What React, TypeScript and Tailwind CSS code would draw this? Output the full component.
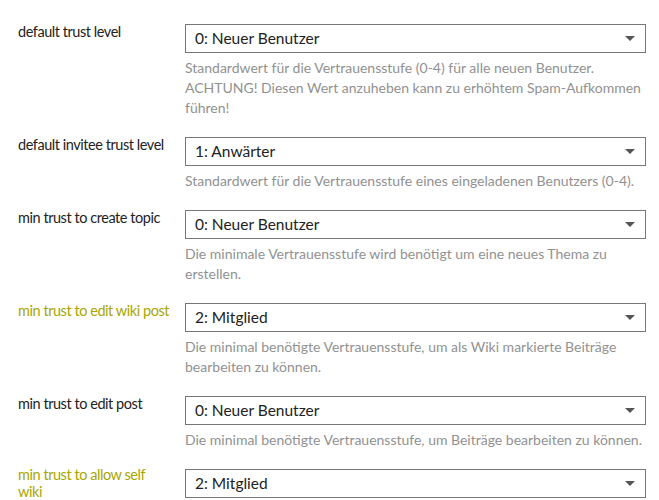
import React from 'react';

interface SettingRow {
  label: string[];
  value: string;
  lines: string[];
  overridden?: boolean;
}

const rows: SettingRow[] = [
  {
    label: ['default trust level'],
    value: '0: Neuer Benutzer',
    lines: [
      'Standardwert für die Vertrauensstufe (0-4) für alle neuen Benutzer.',
      'ACHTUNG! Diesen Wert anzuheben kann zu erhöhtem Spam-Aufkommen',
      'führen!',
    ],
  },
  {
    label: ['default invitee trust level'],
    value: '1: Anwärter',
    lines: ['Standardwert für die Vertrauensstufe eines eingeladenen Benutzers (0-4).'],
  },
  {
    label: ['min trust to create topic'],
    value: '0: Neuer Benutzer',
    lines: ['Die minimale Vertrauensstufe wird benötigt um eine neues Thema zu', 'erstellen.'],
  },
  {
    label: ['min trust to edit wiki post'],
    value: '2: Mitglied',
    overridden: true,
    lines: [
      'Die minimal benötigte Vertrauensstufe, um als Wiki markierte Beiträge',
      'bearbeiten zu können.',
    ],
  },
  {
    label: ['min trust to edit post'],
    value: '0: Neuer Benutzer',
    lines: ['Die minimal benötigte Vertrauensstufe, um Beiträge bearbeiten zu können.'],
  },
  {
    label: ['min trust to allow self', 'wiki'],
    value: '2: Mitglied',
    overridden: true,
    lines: [],
  },
];

function Caret() {
  return (
    <svg width="10" height="5" viewBox="0 0 10 5" className="shrink-0">
      <polygon points="0,0 10,0 5,5" fill="#555555" />
    </svg>
  );
}

export default function App() {
  return (
    <div className="w-[659px] h-[500px] overflow-hidden bg-white pt-[24px] pl-[18px]">
      {rows.map((row) => (
        <div key={row.label.join(' ')} className="flex mb-[19px]">
          {/* setting label */}
          <div
            className={`w-[150px] mr-[17px] shrink-0 font-['Lato',sans-serif] text-[14.5px] tracking-[-0.45px] ${
              row.label.length > 1 ? 'leading-[17px] -mt-[3px]' : 'leading-[15px]'
            } ${row.overridden ? 'text-[#a8a600]' : 'text-[#222222]'}`}
          >
            {row.label.map((l) => (
              <div key={l} className="whitespace-nowrap">
                {l}
              </div>
            ))}
          </div>

          {/* select + description */}
          <div className="w-[461px] shrink-0">
            <div className="h-[29px] border border-[#777777] bg-white flex items-center justify-between pl-[9px] pr-[10px]">
              <span className="font-['Lato',sans-serif] text-[15.5px] text-[#222222]">{row.value}</span>
              <Caret />
            </div>
            {row.lines.length > 0 && (
              <div className="mt-[5px] font-['Lato',sans-serif] text-[14px] leading-[20px] text-[#919191]">
                {row.lines.map((line) => (
                  <div key={line} className="whitespace-nowrap">
                    {line}
                  </div>
                ))}
              </div>
            )}
          </div>
        </div>
      ))}
    </div>
  );
}
